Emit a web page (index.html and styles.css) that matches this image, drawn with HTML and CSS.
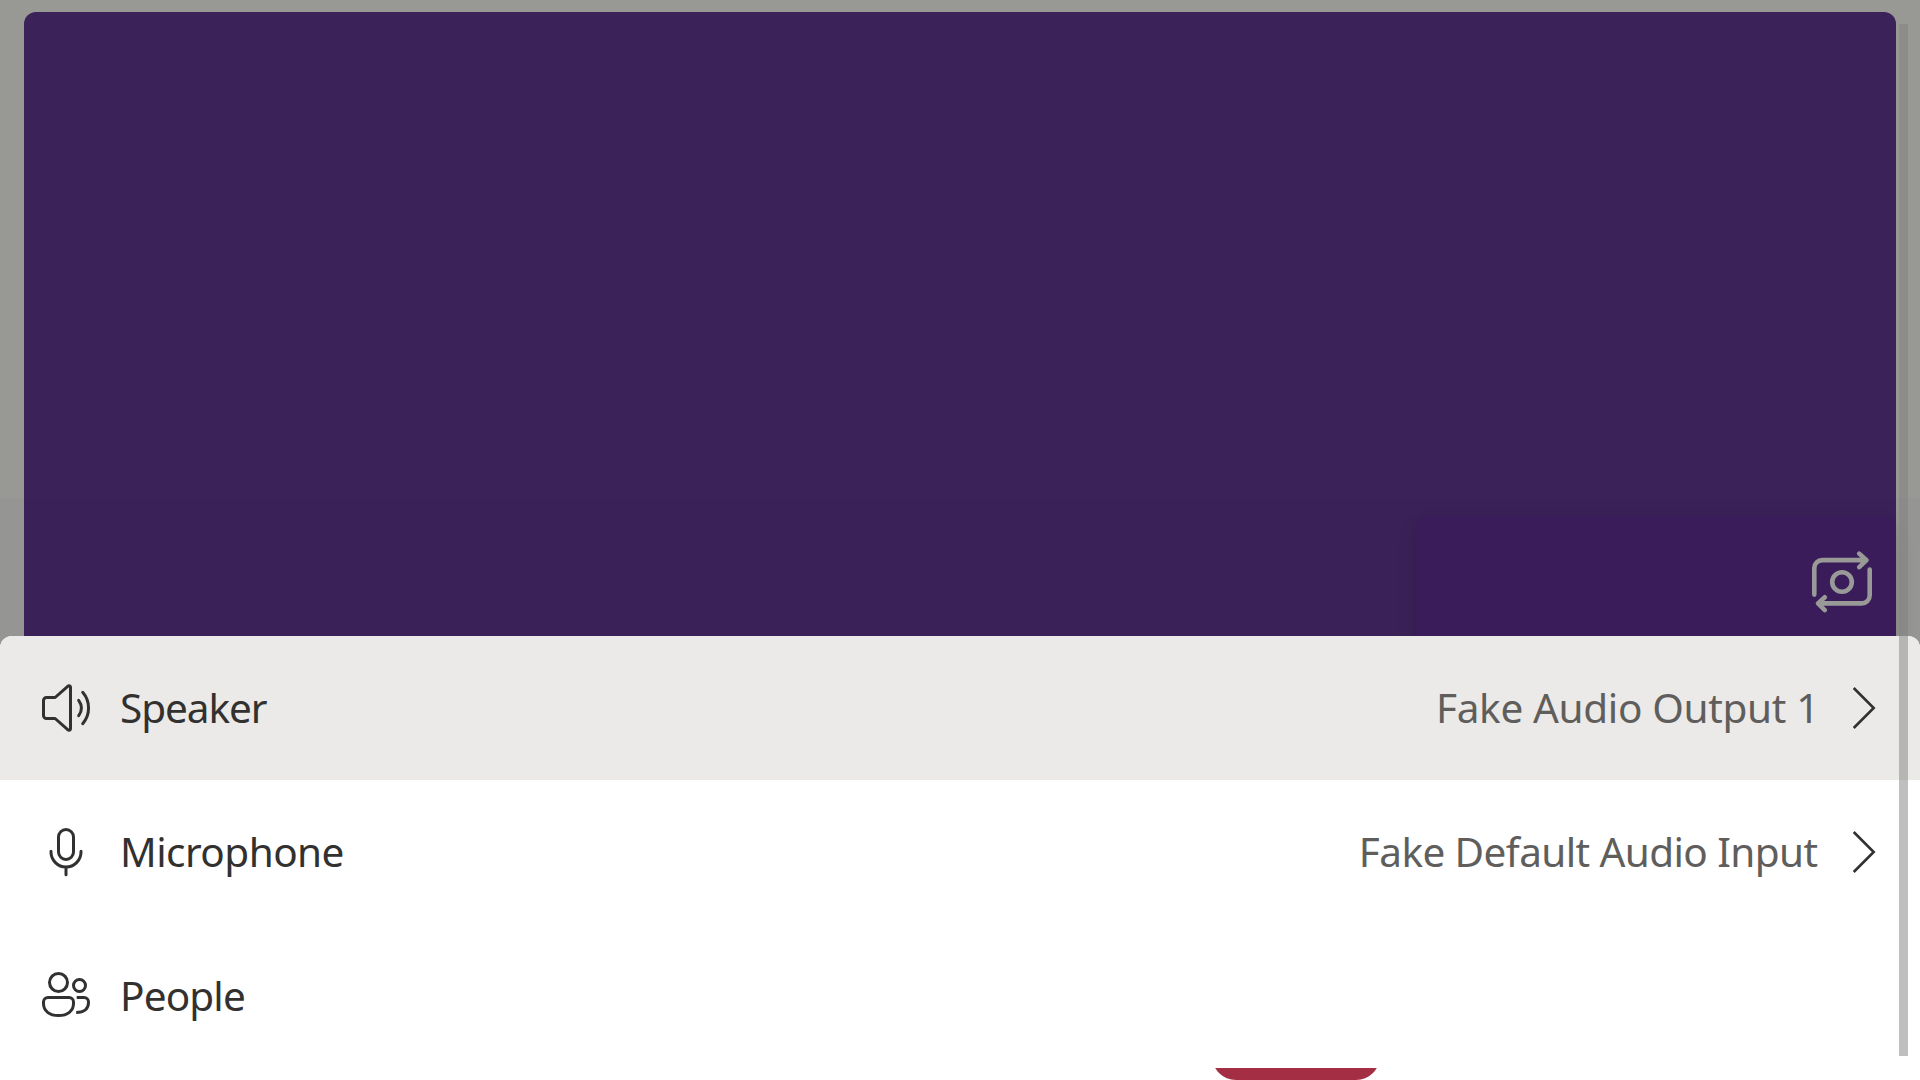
FILE: index.html
```html
<!DOCTYPE html>
<html lang="en">
<head>
<meta charset="utf-8">
<title>Call</title>
<link rel="stylesheet" href="styles.css">
</head>
<body>
<main class="call">
  <section class="stage">
    <div class="video">
      <div class="local-tile">
        <svg class="switch-camera" viewBox="0 0 72 72">
          <path d="M8.3 48.6V22.1a8 8 0 0 1 8-8H60M53.2 7.6l7.3 6.6-7.3 6.9M63.7 23.5v25.9a8 8 0 0 1-8 8H12.5M18.8 51.2l-6.8 6.2 6.8 6.7"/>
          <circle cx="36" cy="36" r="9.8"/>
        </svg>
      </div>
    </div>
  </section>
  <section class="sheet">
    <div class="row row-active">
      <svg class="icon" viewBox="0 0 60 60"><path d="M10.5 19.5h8.6L32 8.1c1-.9 2.5-.2 2.5 1.1v41.6c0 1.3-1.5 2-2.5 1.1L19.1 40.5h-8.6a3 3 0 0 1-3-3v-15a3 3 0 0 1 3-3zM42.7 22.3c3.4 4.8 3.4 10.6 0 15.4M46.7 14.3c7.8 9 7.8 22.4 0 31.4"/></svg>
      <span class="label speaker">Speaker</span>
      <span class="value output">Fake Audio Output 1</span>
      <svg class="chevron" viewBox="0 0 24 44"><path d="M1.7 2l20 20-20 20"/></svg>
    </div>
    <div class="row">
      <svg class="icon" viewBox="0 0 60 60"><rect x="22.5" y="7.5" width="15" height="30" rx="7.5"/><path d="M15 29.2v.8a15 15 0 0 0 30 0v-.8M30 45v7.8"/></svg>
      <span class="label microphone">Microphone</span>
      <span class="value input">Fake Default Audio Input</span>
      <svg class="chevron" viewBox="0 0 24 44"><path d="M1.7 2l20 20-20 20"/></svg>
    </div>
    <div class="row">
      <svg class="icon" viewBox="0 0 60 60"><circle cx="22.5" cy="16.5" r="9"/><circle cx="43.5" cy="19.5" r="6"/><path d="M12 31.5h21a4.5 4.5 0 0 1 4.5 4.5v1.5c0 7.5-6 12-15 12s-15-4.5-15-12V36a4.5 4.5 0 0 1 4.5-4.5z"/><path class="butt" d="M40.7 31.5H48a4.5 4.5 0 0 1 4.5 4.5v.7c0 6-4.5 9.8-12.3 9.8"/></svg>
      <span class="label people">People</span>
    </div>
  </section>
  <footer class="controls"><div class="hang-up"></div></footer>
  <div class="scrollbar"></div>
</main>
</body>
</html>
```
FILE: styles.css
```css
* { box-sizing: border-box; }
body { margin: 0; background: #fff; font-family: "Noto Sans", "Open Sans", sans-serif; }
.call { position: relative; display: flex; flex-direction: column; width: 1920px; height: 1080px; overflow: hidden; }
.stage { flex: 0 0 648px; padding: 12px 24px 0; background: linear-gradient(#989895 498px, #959594 498px); overflow: hidden; }
.video { display: flex; justify-content: flex-end; align-items: flex-end; height: 636px; border-radius: 12px 12px 0 0; background: linear-gradient(#3b2258 486px, #3a2157 486px); }
.local-tile { display: flex; justify-content: flex-end; width: 480px; height: 132px; padding: 30px 18px 0 0; border-radius: 12px 12px 0 0; background: #391c59; box-shadow: 0 10px 22px rgba(0, 0, 0, .09), 0 2px 5px rgba(0, 0, 0, .08); }
svg { display: block; flex: none; fill: none; stroke: #323130; stroke-width: 3; stroke-linecap: round; stroke-linejoin: round; }
.switch-camera { width: 72px; height: 72px; stroke: #999997; stroke-width: 4.6; }
.sheet { position: relative; flex: 0 0 432px; margin-top: -12px; border-radius: 12px 12px 0 0; overflow: hidden; background: #fff; }
.row { display: flex; align-items: center; height: 144px; padding: 0 44px 0 36px; }
.row-active { background: #ebeae8; }
.icon { width: 60px; height: 60px; margin-right: 24px; }
.butt { stroke-linecap: butt; }
.label, .value { font-size: 40.5px; line-height: 56px; white-space: nowrap; color: #323130; letter-spacing: -.55px; }
.speaker { letter-spacing: -1.05px; }
.people { letter-spacing: -.85px; }
.value { margin-left: auto; margin-right: 34.5px; color: #605e5c; }
.input { letter-spacing: -.6px; }
.output { margin-right: 33px; letter-spacing: -.35px; }
.chevron { width: 24px; height: 44px; stroke-width: 2.6; stroke-linecap: butt; stroke-linejoin: miter; }
.controls { flex: 0 0 12px; display: flex; align-items: flex-end; padding-left: 1212px; overflow: hidden; }
.hang-up { flex: none; width: 168px; height: 144px; border-radius: 24px; background: #a42e43; }
.scrollbar { position: absolute; top: 24px; right: 12px; width: 9px; height: 1032px; background: rgba(128, 128, 128, .5); }
```
